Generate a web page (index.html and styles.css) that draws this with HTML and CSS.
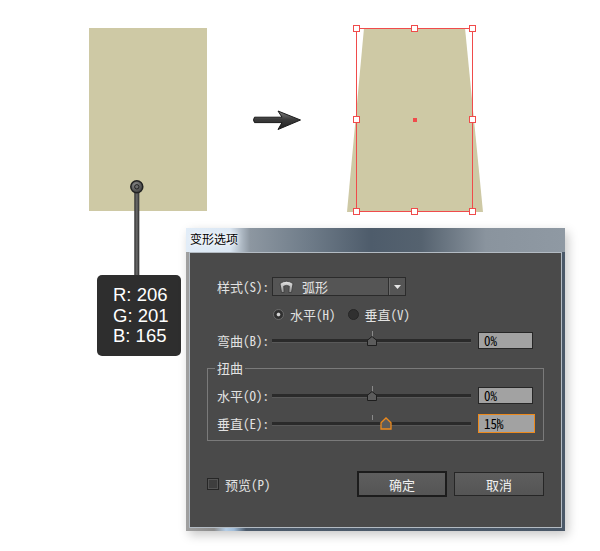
FILE: index.html
```html
<!DOCTYPE html>
<html lang="zh-CN">
<head>
    <meta charset="UTF-8">
    <meta name="viewport" content="width=device-width, initial-scale=1.0">
    <title>变形选项</title>
    <link rel="stylesheet" href="styles.css">
</head>
<body>

    <div class="stage">
        <!-- original swatch with colour pin -->
        <div class="swatch"></div>
        <svg class="pin" viewBox="128 178 18 100">
            <defs>
                <linearGradient id="stemGrad" x1="0" y1="0" x2="1" y2="0">
                    <stop offset="0" stop-color="#2a2a2a"/>
                    <stop offset="0.5" stop-color="#6c6c6c"/>
                    <stop offset="1" stop-color="#2a2a2a"/>
                </linearGradient>
                <radialGradient id="pinGrad" cx="0.4" cy="0.35" r="0.7">
                    <stop offset="0" stop-color="#8a8a8a"/>
                    <stop offset="1" stop-color="#3a3a3a"/>
                </radialGradient>
            </defs>
            <rect x="134.3" y="191" width="5" height="86" fill="url(#stemGrad)"/>
            <circle cx="136.8" cy="186.8" r="6" fill="url(#pinGrad)" stroke="#222" stroke-width="1.5"/>
            <circle cx="136.8" cy="186.8" r="2.2" fill="#6a6a6a" stroke="#1e1e1e" stroke-width="1"/>
        </svg>
        <div class="rgb-label">
            <div>R: 206</div>
            <div>G: 201</div>
            <div>B: 165</div>
        </div>

        <svg class="arrow" viewBox="250 105 55 30">
            <defs>
                <linearGradient id="arrowGrad" x1="0" y1="0" x2="0" y2="1">
                    <stop offset="0" stop-color="#808080"/>
                    <stop offset="0.45" stop-color="#3c3c3c"/>
                    <stop offset="1" stop-color="#202020"/>
                </linearGradient>
            </defs>
            <path d="M254.5 117.2 H282 L278 111 L300.5 120 L278 129.5 L282 122.6 H254.5 Q252.5 120 254.5 117.2 Z" fill="url(#arrowGrad)" stroke="#1a1a1a" stroke-width="1" stroke-linejoin="round"/>
        </svg>

        <!-- warped result with selection -->
        <svg class="warped" viewBox="340 20 150 200">
            <polygon points="364,28 465,28 483,212 347,212" fill="#cec9a5"/>
            <rect x="356.5" y="28.5" width="116" height="183" fill="none" stroke="#f04b4b" stroke-width="1"/>
            <g fill="#fff" stroke="#f04b4b" stroke-width="1">
                <rect x="353.5" y="25.5" width="6" height="6"/>
                <rect x="411.5" y="25.5" width="6" height="6"/>
                <rect x="469.5" y="25.5" width="6" height="6"/>
                <rect x="353.5" y="116.5" width="6" height="6"/>
                <rect x="469.5" y="116.5" width="6" height="6"/>
                <rect x="353.5" y="208.5" width="6" height="6"/>
                <rect x="411.5" y="208.5" width="6" height="6"/>
                <rect x="469.5" y="208.5" width="6" height="6"/>
            </g>
            <rect x="413" y="118" width="4" height="4" fill="#f04b4b"/>
        </svg>

        <!-- warp options dialog -->
        <div class="dialog">
            <div class="dialog-title">变形选项</div>
            <div class="dialog-body">
                <div class="row style-row">
                    <span class="label">样式(S):</span>
                    <div class="select">
                        <svg class="select-icon" viewBox="0 0 15 13">
                            <defs>
                                <linearGradient id="arcGrad" x1="0" y1="0" x2="0" y2="1">
                                    <stop offset="0" stop-color="#e8e8e8"/>
                                    <stop offset="1" stop-color="#8c8c8c"/>
                                </linearGradient>
                            </defs>
                            <path d="M1 3.5 Q7.5 -1 14 3.5 L12.5 12.5 H9.8 L10.3 6.2 Q7.5 4.6 4.7 6.2 L5.2 12.5 H2.5 Z" fill="url(#arcGrad)" stroke="#3a3a3a" stroke-width="0.8"/>
                        </svg>
                        <span class="select-value">弧形</span>
                        <span class="select-caret">
                            <svg viewBox="0 0 7 4" width="7" height="4"><polygon points="0,0 7,0 3.5,4" fill="#e6e6e6"/></svg>
                        </span>
                    </div>
                </div>

                <div class="row radio-row">
                    <span class="radio checked"></span><span>水平(H)</span>
                    <span class="radio second"></span><span>垂直(V)</span>
                </div>

                <div class="row slider-row bend-row">
                    <span class="label">弯曲(B):</span>
                    <div class="slider">
                        <span class="tick" style="left: 50%"></span>
                        <svg class="thumb" style="left: 50%" viewBox="0 0 10 10"><polygon points="0.5,9.5 0.5,4.2 5,0.5 9.5,4.2 9.5,9.5" fill="#5c5c5c" stroke="#1e1e1e"/></svg>
                    </div>
                    <div class="field">0%</div>
                </div>

                <fieldset class="group">
                    <legend>扭曲</legend>
                    <div class="row slider-row">
                        <span class="label">水平(O):</span>
                        <div class="slider">
                            <span class="tick" style="left: 50%"></span>
                            <svg class="thumb" style="left: 50%" viewBox="0 0 10 10"><polygon points="0.5,9.5 0.5,4.2 5,0.5 9.5,4.2 9.5,9.5" fill="#5c5c5c" stroke="#1e1e1e"/></svg>
                        </div>
                        <div class="field">0%</div>
                    </div>
                    <div class="row slider-row">
                        <span class="label">垂直(E):</span>
                        <div class="slider">
                            <span class="tick tick-free" style="left: 50%"></span>
                            <svg class="thumb thumb-active" style="left: 57.5%" viewBox="0 0 12 13"><polygon points="1,12 1,5.8 6,1 11,5.8 11,12" fill="#5c5c5c" stroke="#ee8a1c" stroke-width="1.3"/></svg>
                        </div>
                        <div class="field field-active">15<span class="caret"></span>%</div>
                    </div>
                </fieldset>

                <div class="footer">
                    <label class="check"><span class="check-box"></span>预览(P)</label>
                    <div class="buttons">
                        <button class="btn btn-default">确定</button>
                        <button class="btn">取消</button>
                    </div>
                </div>
            </div>
        </div>
    </div>

</body>
</html>
```

FILE: styles.css
```css
/* Reset */
* {
    box-sizing: border-box;
    margin: 0;
    padding: 0;
}

body {
    background: #fff;
    font-family: "Noto Sans CJK SC", sans-serif;
}

.stage {
    position: relative;
    width: 600px;
    height: 551px;
    overflow: hidden;
}

/* left: swatch + colour readout */
.swatch {
    position: absolute;
    left: 89px;
    top: 28px;
    width: 118px;
    height: 183px;
    background: #cec9a5;
}

.pin {
    position: absolute;
    left: 128px;
    top: 178px;
    width: 18px;
    height: 100px;
}

.rgb-label {
    position: absolute;
    left: 97px;
    top: 275px;
    width: 84px;
    height: 81px;
    padding: 10px 0 0 16px;
    background: #2e2e2e;
    border-radius: 5px;
    color: #fff;
    font-family: "Liberation Sans", Arial, sans-serif;
    font-size: 18.5px;
    line-height: 20.7px;
}

.arrow {
    position: absolute;
    left: 250px;
    top: 105px;
    width: 55px;
    height: 30px;
}

.warped {
    position: absolute;
    left: 340px;
    top: 20px;
    width: 150px;
    height: 200px;
}

/* dialog window */
.dialog {
    position: absolute;
    left: 186px;
    top: 228px;
    width: 379px;
    height: 303px;
    display: flex;
    flex-direction: column;
    background:
        linear-gradient(to right, #e2edf8 0, #dbe7f3 44px, #8d97a1 64px, #707d8a 120px, #4e5c6b 185px, #55626f 235px, #8a949e 300px, #8f99a3 100%) top / 100% 24px no-repeat,
        linear-gradient(to right, #a0a0a0 0, #8c8c8c 28px, #b4cde6 40px, #a0bcd8 48px, #4c5a6a 60px, #4a5868 100%);
    box-shadow: 3px 4px 10px rgba(0, 0, 0, 0.22);
}

.dialog-title {
    height: 24px;
    padding: 3px 0 0 4px;
    font-size: 12px;
    line-height: 16px;
    color: #000;
    text-shadow: 0 0 6px #fff, 0 0 3px #fff;
}

.dialog-body {
    flex: 1;
    margin: 0 3px 3px;
    padding: 24px 17px 0;
    background: #4a4a4a;
    border: 1px solid #b3bbc3;
    color: #e2e2e2;
    font-size: 13px;
    line-height: 19px;
    font-feature-settings: "hwid";
}

.row {
    display: flex;
    align-items: center;
    height: 19px;
}

.label {
    flex: none;
    width: 55px;
    white-space: nowrap;
}

.style-row,
.bend-row {
    padding-left: 10px;
}

/* dropdown */
.select {
    display: flex;
    align-items: center;
    width: 134px;
    height: 19px;
    padding-left: 6px;
    background: #555;
    border: 1px solid #2b2b2b;
}

.select-icon {
    width: 15px;
    height: 13px;
    margin-right: 8px;
}

.select-value {
    flex: 1;
}

.select-caret {
    display: flex;
    align-items: center;
    justify-content: center;
    width: 17px;
    height: 100%;
    border-left: 1px solid #2e2e2e;
    box-shadow: inset 1px 0 #6a6a6a;
}

/* radios */
.radio-row {
    height: 16px;
    margin-top: 10px;
    padding-left: 66px;
}

.radio {
    flex: none;
    width: 11px;
    height: 11px;
    margin-right: 6px;
    border-radius: 50%;
    background: #303030;
    border: 1px solid #262626;
}

.radio.checked {
    background: radial-gradient(circle closest-side, #d4d4d4 0, #d4d4d4 1.3px, #303030 2.3px);
    border-color: #6a6a6a;
}

.radio.second {
    margin-left: 12px;
}

/* sliders */
.slider-row {
    margin-top: 9px;
}

.slider {
    position: relative;
    flex: none;
    width: 199px;
    height: 19px;
    background:
        linear-gradient(#2a2a2a, #2a2a2a) 0 8px / 100% 3px no-repeat,
        linear-gradient(#595959, #595959) 0 11px / 100% 1px no-repeat;
}

.tick {
    position: absolute;
    top: 0;
    width: 1px;
    height: 6px;
    background: #8a8a8a;
}

.tick-free {
    top: 1px;
    height: 5px;
}

.thumb {
    position: absolute;
    top: 5px;
    width: 10px;
    height: 10px;
    transform: translateX(-50%);
}

.thumb-active {
    top: 3px;
    width: 12px;
    height: 13px;
}

.field {
    flex: none;
    width: 55px;
    height: 17px;
    margin-left: 7px;
    padding-left: 5px;
    background: #a2a2a2;
    border: 1px solid #262626;
    color: #000;
    line-height: 15px;
}

.field-active {
    width: 57px;
    height: 19px;
    border-color: #ee8a1c;
    line-height: 17px;
}

.caret {
    display: inline-block;
    width: 1px;
    height: 13px;
    margin-right: -1px;
    vertical-align: -2px;
    background: #555;
}

/* group box */
.group {
    margin-top: 10px;
    padding: 1px 0 7px 9px;
    border: 1px solid #7a7a7a;
    min-width: 0;
}

.group legend {
    margin-left: -2px;
    padding: 0 2px;
    line-height: 16px;
}

/* footer */
.footer {
    display: flex;
    align-items: center;
    justify-content: space-between;
    height: 26px;
    margin-top: 30px;
}

.check {
    display: flex;
    align-items: center;
    gap: 6px;
}

.check-box {
    width: 12px;
    height: 12px;
    background: #3e3e3e;
    border: 1px solid #262626;
    box-shadow: inset 0 0 0 1px #555;
}

.buttons {
    display: flex;
    align-items: center;
    gap: 7px;
}

.btn {
    width: 90px;
    height: 24px;
    background: linear-gradient(#5e5e5e, #555);
    border: 1px solid #262626;
    color: #f0f0f0;
    font-family: inherit;
    font-size: 13px;
    font-feature-settings: "hwid";
}

.btn-default {
    height: 26px;
    border: 2px solid #1c1c1c;
}
```
